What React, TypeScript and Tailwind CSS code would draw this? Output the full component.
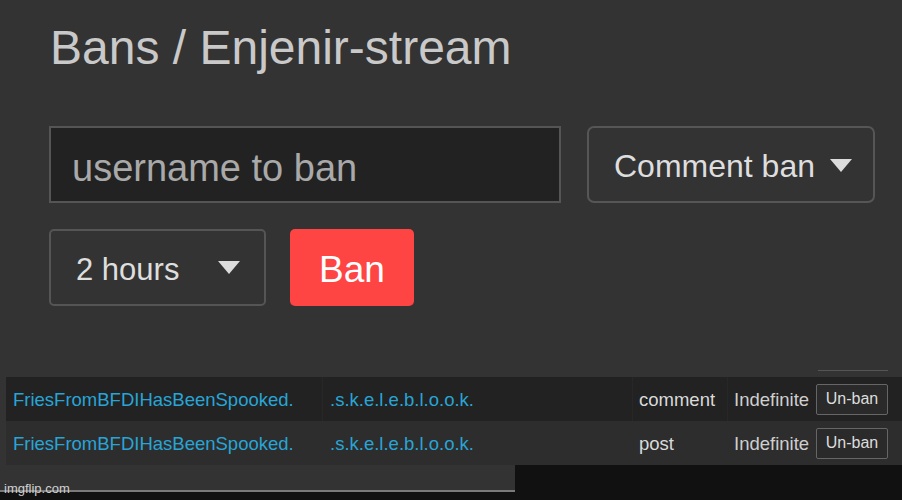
import React from 'react';

const rows = [
  { user: 'FriesFromBFDIHasBeenSpooked.', mod: '.s.k.e.l.e.b.l.o.o.k.', type: 'comment', length: 'Indefinite', bg: 'bg-[#222222]', divider: true },
  { user: 'FriesFromBFDIHasBeenSpooked.', mod: '.s.k.e.l.e.b.l.o.o.k.', type: 'post', length: 'Indefinite', bg: 'bg-[#2d2d2d]', divider: false },
];

const Caret: React.FC<{ className?: string }> = ({ className }) => (
  <svg width="22" height="13" viewBox="0 0 22 13" className={className}>
    <polygon points="0,0 22,0 11,13" fill="#dcdcdc" />
  </svg>
);

const App: React.FC = () => {
  return (
    <div
      className="w-[902px] h-[500px] bg-[#333333] overflow-hidden flex flex-col relative"
      style={{ fontFamily: '"Liberation Sans", Arial, sans-serif' }}
    >
      {/* header + form */}
      <div className="pl-[49px] pt-[20px]">
        <h1 className="text-[48px] leading-[56px] text-[#c9c9c9] pl-[1px]">Bans / Enjenir-stream</h1>

        <div className="flex gap-[26px] mt-[50px]">
          <div className="w-[512px] h-[77px] bg-[#222222] border-2 border-[#555555] flex items-center pl-[21px] pt-[7px]">
            <span className="text-[38px] text-[#a9a9a9]">username to ban</span>
          </div>
          <div className="w-[288px] h-[77px] border-2 border-[#565656] rounded-[7px] flex items-center pl-[25px] gap-[15px]">
            <span className="text-[32px] text-[#dedede] pt-[3px]">Comment ban</span>
            <Caret className="mt-[1px]" />
          </div>
        </div>

        <div className="flex gap-[24px] mt-[26px]">
          <div className="w-[217px] h-[77px] border-2 border-[#555555] rounded-[5px] flex items-center pl-[25px]">
            <span className="text-[31px] text-[#dedede] pt-[5px]">2 hours</span>
            <Caret className="ml-[39px]" />
          </div>
          <div className="w-[124px] h-[77px] bg-[#ff4444] rounded-[5px] flex items-center justify-center pt-[5px]">
            <span className="text-[37px] text-white">Ban</span>
          </div>
        </div>
      </div>

      {/* table */}
      <div className="mt-[64px] flex justify-end pr-[14px]">
        <div className="w-[70px] h-[1px] bg-[#555555]" />
      </div>
      <div className="mt-[6px] ml-[6px]">
        {rows.map((r, i) => (
          <div key={i} className={`flex items-center h-[44px] ${r.bg} text-[18.5px]`}>
            <div className={`w-[317px] h-full flex items-center pl-[7px] pt-[2px] text-[#28a5d6] ${r.divider ? 'border-r border-[#272727]' : ''}`}>{r.user}</div>
            <div className={`w-[310px] h-full flex items-center pl-[7px] pt-[2px] text-[#28a5d6] ${r.divider ? 'border-r border-[#272727]' : ''}`}>{r.mod}</div>
            <div className={`w-[95px] h-full flex items-center pl-[6px] pt-[2px] text-[#dadada] ${r.divider ? 'border-r border-[#272727]' : ''}`}>{r.type}</div>
            <div className="w-[88px] h-full flex items-center pl-[6px] pt-[2px] text-[#cfcfcf]">{r.length}</div>
            <div className="flex items-center">
              <div className="h-[31px] w-[72px] border border-[#666666] bg-[#2a2a2a] rounded-[2px] flex items-center justify-center text-[16px] text-[#dddddd]">
                Un-ban
              </div>
            </div>
          </div>
        ))}
      </div>

      {/* bottom strip */}
      <div className="flex flex-1">
        <div className="w-[515px] flex flex-col">
          <div className="h-[25px] bg-[#333333] flex items-end pl-[4px]">
            <span className="text-[13px] leading-[15px] text-[#d0d0d0] translate-y-[6px]">imgflip.com</span>
          </div>
          <div className="h-[2px] bg-[#7a7a7a]" />
          <div className="flex-1 bg-[#111111]" />
        </div>
        <div className="flex-1 bg-[#111111]" />
      </div>
    </div>
  );
};

export default App;
